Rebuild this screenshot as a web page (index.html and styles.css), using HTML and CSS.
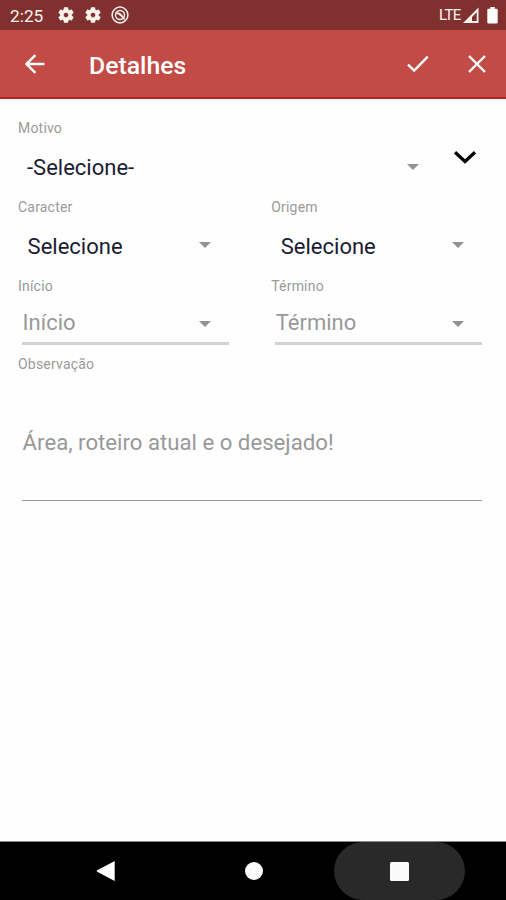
FILE: index.html
```html
<!DOCTYPE html>
<html lang="pt-BR">
<head>
<meta charset="utf-8">
<title>Detalhes</title>
<link rel="stylesheet" href="styles.css">
</head>
<body>
<svg class="defs" width="0" height="0">
  <symbol id="gear" viewBox="0 0 24 24"><path d="M19.43 12.98c.04-.32.07-.64.07-.98s-.03-.66-.07-.98l2.11-1.65c.19-.15.24-.42.12-.64l-2-3.46c-.12-.22-.39-.3-.61-.22l-2.49 1c-.52-.4-1.08-.73-1.69-.98l-.38-2.65C14.46 2.18 14.25 2 14 2h-4c-.25 0-.46.18-.49.42l-.38 2.65c-.61.25-1.17.59-1.69.98l-2.49-1c-.23-.09-.49 0-.61.22l-2 3.46c-.13.22-.07.49.12.64l2.11 1.65c-.04.32-.07.65-.07.98s.03.66.07.98l-2.11 1.65c-.19.15-.24.42-.12.64l2 3.46c.12.22.39.3.61.22l2.49-1c.52.4 1.08.73 1.69.98l.38 2.65c.03.24.24.42.49.42h4c.25 0 .46-.18.49-.42l.38-2.65c.61-.25 1.17-.59 1.69-.98l2.49 1c.23.09.49 0 .61-.22l2-3.46c.12-.22.07-.49-.12-.64l-2.11-1.65zM12 15.500c-1.930 0-3.500-1.570-3.500-3.500s1.570-3.500 3.500-3.500 3.500 1.570 3.500 3.500-1.570 3.500-3.500 3.500z"/></symbol>
</svg>
<header class="statusbar">
  <span class="clock">2:25</span>
  <svg class="gear" width="18" height="18"><use href="#gear"/></svg>
  <svg class="gear" width="18" height="18"><use href="#gear"/></svg>
  <svg class="sync" width="18" height="18" viewBox="0 0 18 18" fill="none" stroke="#fff3ed"><circle cx="9" cy="9" r="7.9" stroke-width="1.5"/><circle cx="9" cy="9" r="4.5" stroke-width="1.4"/><path d="M5.6 7.5C8 6.2 9.8 8.8 13.6 13.4" stroke-width="1.9"/></svg>
  <span class="lte">LTE</span>
  <svg class="signal" width="16" height="16" viewBox="0 0 16 16"><path fill="#fff3ed" fill-rule="evenodd" d="M0 16L15.5 .5V16ZM9 14H13.7V5.2L9 9.9Z"/></svg>
  <svg class="battery" width="11" height="17" viewBox="0 0 11 17"><path fill="#fff" d="M3.3 0H7.7V1.7H9.5Q10.7 1.7 10.7 2.9V15.3Q10.7 16.5 9.5 16.5H1.5Q.3 16.5 .3 15.3V2.9Q.3 1.7 1.5 1.7H3.3Z"/></svg>
</header>
<div class="appbar">
  <svg class="back" width="20" height="20" viewBox="0 0 20 20"><path d="M19.5 10H1.8M10.4 1.1L1.5 10L10.4 18.9"/></svg>
  <h1 class="title">Detalhes</h1>
  <svg class="check" width="22" height="18" viewBox="0 0 22 18"><path d="M1 9.6L7.2 15.6L20.7 1.7"/></svg>
  <svg class="close" width="18" height="18" viewBox="0 0 18 18"><path d="M1 1L17 17M17 1L1 17"/></svg>
</div>
<main class="form">
  <div class="row">
    <div class="field wide">
      <div class="label">Motivo</div>
      <div class="select first"><span>-Selecione-</span><i class="caret"></i></div>
    </div>
    <svg class="expand" width="24" height="16" viewBox="0 0 24 16"><path d="M2 2.2L12 11.5L22 2.2"/></svg>
  </div>
  <div class="row">
    <div class="field">
      <div class="label">Caracter</div>
      <div class="select"><span>Selecione</span><i class="caret"></i></div>
    </div>
    <div class="field">
      <div class="label">Origem</div>
      <div class="select"><span>Selecione</span><i class="caret"></i></div>
    </div>
  </div>
  <div class="row">
    <div class="field">
      <div class="label">Início</div>
      <div class="date"><span>Início</span><i class="caret"></i></div>
    </div>
    <div class="field">
      <div class="label">Término</div>
      <div class="date"><span>Término</span><i class="caret"></i></div>
    </div>
  </div>
  <div class="label">Observação</div>
  <div class="notes">Área, roteiro atual e o desejado!</div>
</main>
<nav class="navbar">
  <svg class="nav-back" width="20" height="22" viewBox="0 0 20 22"><path fill="#fff" d="M18.7 1V21L1.2 11.8Q0 11 1.2 10.2Z"/></svg>
  <span class="nav-home"></span>
  <span class="nav-recent"><span class="square"></span></span>
</nav>
</body>
</html>
```

FILE: styles.css
```css
* { box-sizing: border-box; }
body {
  margin: 0;
  height: 900px;
  display: flex;
  flex-direction: column;
  overflow: hidden;
  background: #fefefe;
  font-family: Roboto, "Liberation Sans", sans-serif;
}
.defs { position: absolute; }
svg { flex: none; }

.statusbar {
  height: 30px;
  display: flex;
  align-items: center;
  padding: 0 8px 0 10px;
  background: #80312f;
  color: #fff3ed;
}
.clock { width: 47px; font-size: 17.3px; line-height: 20px; padding-top: 2px; }
.gear { fill: #fff3ed; stroke: #fff3ed; stroke-width: 0.8; margin-right: 9px; }
.sync { margin-right: auto; }
.lte { font-size: 15px; letter-spacing: -0.6px; width: 24px; }
.signal { margin-right: 8px; }

.appbar {
  height: 69px;
  display: flex;
  align-items: center;
  padding: 0 20px 0 25px;
  background: #c34b46;
  border-bottom: 2px solid #b72324;
}
.appbar path { fill: none; stroke: #fff; stroke-width: 2.4; }
.title {
  margin: 5px auto 0 44px;
  color: #fff;
  font-size: 24.8px;
  line-height: 30px;
  font-weight: 500;
}
.check { margin: 1px 39px 0 0; }

.form { flex: 1; padding: 19px 0 0 18px; }
.row { display: flex; height: 78.8px; }
.field { flex: none; width: 253.2px; }
.field.wide { width: 435px; }
.label { font-size: 14px; line-height: 20px; letter-spacing: 0.2px; color: #9a9a9a; }
.select, .date {
  display: flex;
  align-items: center;
  justify-content: space-between;
  font-size: 22px;
  line-height: 30px;
}
.select { margin: 15px 60.5px 0 9.6px; color: #1b1b32; }
.select.first { margin: 15px 34px 0 9px; }
.caret {
  border: 6px solid transparent;
  border-top-color: #929292;
  border-bottom: 0;
}
.select .caret { margin-bottom: 3px; }
.date .caret { margin-top: 1px; }
.date {
  width: 207px;
  height: 38px;
  margin: 11px 0 0 4px;
  padding: 0 18.5px 2px 0.6px;
  border-bottom: 3px solid #d3d3d3;
  color: #999;
}
.expand { margin-top: 32px; }
.expand path { fill: none; stroke: #050505; stroke-width: 3.3; }
.notes {
  width: 460px;
  margin: 53px 0 0 4px;
  padding: 0 0 42.6px 0.6px;
  border-bottom: 1px solid #9b9b9b;
  color: #999;
  font-size: 22.2px;
  line-height: 30px;
}

.navbar {
  height: 59px;
  display: flex;
  align-items: center;
  border-top: 1px solid #888;
  background: #000;
}
.nav-back { margin-left: 96px; }
.nav-home { width: 18px; height: 18px; margin-left: 128.5px; border-radius: 50%; background: #fafafa; }
.nav-recent {
  display: flex;
  align-items: center;
  justify-content: center;
  width: 131px;
  height: 58px;
  margin-left: 71.5px;
  border-radius: 30px;
  background: #292929;
}
.square { width: 19px; height: 19px; border-radius: 1.5px; background: #fafafa; }
```
